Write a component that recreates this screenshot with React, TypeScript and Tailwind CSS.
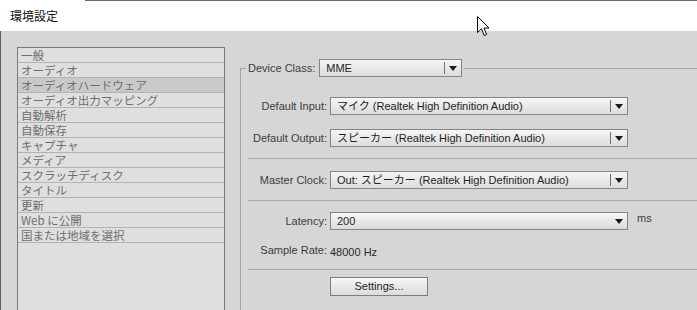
import type { ReactNode } from 'react';

const latin = { fontFamily: '"Liberation Sans", "Noto Sans CJK JP", sans-serif' };
const cjk = { fontFamily: '"Noto Sans CJK JP", "Liberation Sans", sans-serif' };

const categories = [
  '一般',
  'オーディオ',
  'オーディオハードウェア',
  'オーディオ出力マッピング',
  '自動解析',
  '自動保存',
  'キャプチャ',
  'メディア',
  'スクラッチディスク',
  'タイトル',
  '更新',
  'Web に公開',
  '国または地域を選択',
];

/** 黒い下向き三角 */
function Arrow() {
  return (
    <svg width="8" height="5" viewBox="0 0 8 5" className="shrink-0">
      <path d="M0 0H8L4 5Z" fill="#1a1a1a" />
    </svg>
  );
}

/** Windows 風のドロップダウン */
function Select({ value, width, divider = true }: { value: ReactNode; width: string; divider?: boolean }) {
  return (
    <div
      className={`flex h-[18px] ${width} items-center border border-[#858585] bg-gradient-to-b from-[#f6f6f6] to-[#dcdcdc] text-[11px] text-[#1e1e1e]`}
    >
      <span className="flex-1 truncate whitespace-nowrap pl-[6px] leading-[14px]">{value}</span>
      {divider && <span className="h-[12px] w-px bg-[#6f6f6f]" />}
      <span className="flex w-[16px] justify-center">
        <Arrow />
      </span>
    </div>
  );
}

function Row({ label, children }: { label: string; children: ReactNode }) {
  return (
    <div className="flex items-center">
      <span className="w-[79px] shrink-0 whitespace-nowrap text-right text-[11px] text-[#3c3c3c]">{label}</span>
      <span className="ml-[3px] flex items-center">{children}</span>
    </div>
  );
}

const Separator = () => <div className="h-px bg-[#a9a9a9]" />;

export default function App() {
  return (
    <div className="relative h-[310px] w-[697px] overflow-hidden bg-[#d6d6d6]" style={latin}>
      {/* タイトルバー */}
      <div className="h-[31px] bg-white">
        <div className="ml-[85px] h-px bg-[#6c6c6c]" />
        <div className="pl-[10px] pt-[7px] text-[12px] leading-[16px] text-[#111]" style={cjk}>
          環境設定
        </div>
      </div>

      <div className="flex h-[279px] border-l border-[#5e5e5e]">
        {/* 左：カテゴリ一覧 */}
        <div className="pl-[16px] pt-[16px]">
          <div className="h-full w-[208px] border border-b-0 border-[#7b7b7b] bg-[#dfdfdf]">
            {categories.map((c, i) => (
              <div
                key={c}
                className={`h-[15px] overflow-hidden border-b border-[#b3b3b3] pl-[3px] text-[11.5px] leading-[14px] text-[#6e6e6e] ${
                  i === 2 ? 'bg-[#c9c9c9]' : ''
                }`}
                style={cjk}
              >
                {c}
              </div>
            ))}
          </div>
        </div>

        {/* 右：オーディオハードウェア */}
        <fieldset className="ml-[15px] mt-[28px] flex-1 border-l border-t border-[#a4a4a4] pl-[7px]">
          <legend className="-ml-[2px] px-[2px]">
            <div className="flex items-center">
              <span className="whitespace-nowrap text-[11px] text-[#3c3c3c]">Device Class:</span>
              <span className="ml-[4px]">
                <Select value="MME" width="w-[143px]" />
              </span>
            </div>
          </legend>

          <div className="flex flex-col pt-[20px]">
            <Row label="Default Input:">
              <Select value="マイク (Realtek High Definition Audio)" width="w-[298px]" />
            </Row>
            <div className="mt-[14px]">
              <Row label="Default Output:">
                <Select value="スピーカー (Realtek High Definition Audio)" width="w-[298px]" />
              </Row>
            </div>
            <div className="mt-[11px]">
              <Separator />
            </div>
            <div className="mt-[12px]">
              <Row label="Master Clock:">
                <Select value="Out: スピーカー (Realtek High Definition Audio)" width="w-[298px]" />
              </Row>
            </div>
            <div className="mt-[11px]">
              <Separator />
            </div>
            <div className="mt-[11px]">
              <Row label="Latency:">
                <Select value="200" width="w-[298px]" divider={false} />
                <span className="ml-[9px] self-start text-[11px] leading-[12px] text-[#3c3c3c]">ms</span>
              </Row>
            </div>
            <div className="mt-[10px]">
              <Row label="Sample Rate:">
                <span className="pt-[4px] text-[11px] text-[#2a2a2a]">48000 Hz</span>
              </Row>
            </div>
            <div className="mt-[8px]">
              <Separator />
            </div>
            <div className="mt-[7px] pl-[82px]">
              <button className="flex h-[19px] w-[98px] items-center justify-center border border-[#7d7d7d] bg-gradient-to-b from-[#f6f6f6] to-[#dcdcdc] text-[11px] text-[#1e1e1e]">
                Settings...
              </button>
            </div>
          </div>
        </fieldset>
      </div>

      {/* マウスカーソル */}
      <svg className="absolute left-[477px] top-[16px]" width="13" height="21" viewBox="0 0 13 21">
        <path
          d="M0.5 0.5V16.5L4.5 12.8L7.2 19.5L9.6 18.5L7 12H12Z"
          fill="#fff"
          stroke="#000"
          strokeWidth="1"
          strokeLinejoin="miter"
        />
      </svg>
    </div>
  );
}
